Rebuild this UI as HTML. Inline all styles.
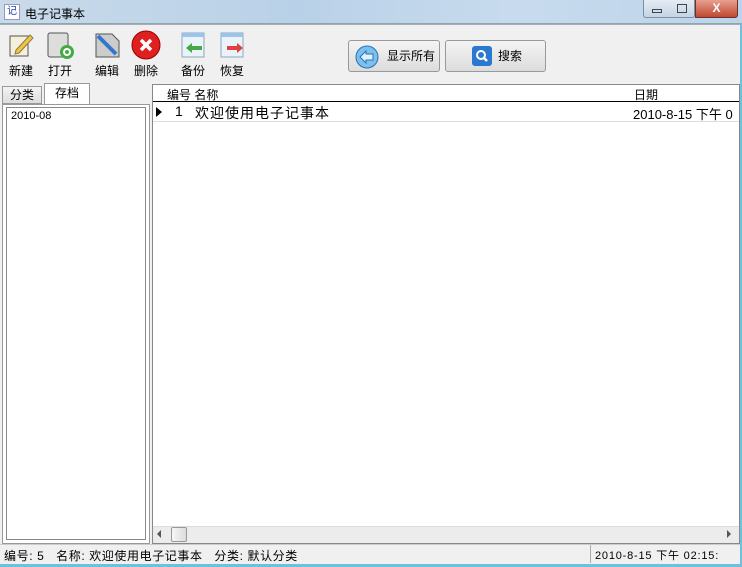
<!DOCTYPE html>
<html><head><meta charset="utf-8"><style>
*{margin:0;padding:0;box-sizing:border-box}
body{width:742px;height:567px;overflow:hidden;background:#f0f0f0;font-family:"Liberation Sans","Noto Sans CJK SC",sans-serif;font-size:12px;color:#000;position:relative}
.abs{position:absolute}
#title{left:0;top:0;width:742px;height:24px;background:linear-gradient(90deg,#c9daea,#b9d1e8 40%,#c8dbee 70%,#bcd3ea);border-bottom:1px solid #8aa;}
.btn{position:absolute;top:30px;text-align:center;font-size:12px}
.btn .ic{width:30px;height:30px;margin:0 auto 2px}
.bigbtn{position:absolute;top:40px;height:32px;border:1px solid #999;border-radius:3px;background:linear-gradient(#f4f4f4,#dcdcdc);font-size:12px;line-height:30px}
</style></head><body>
<div id="title" class="abs">
  <div class="abs" style="left:4px;top:4px;width:16px;height:16px;background:#fff;border:1px solid #99b;font-size:10px;color:#24a;text-align:center;line-height:14px">记</div>
  <div class="abs" style="left:25px;top:5px;font-size:12px">电子记事本</div>
  <div class="abs" style="left:643px;top:0;width:52px;height:18px;border:1px solid #7c8ea0;border-top:none;border-radius:0 0 3px 3px;background:linear-gradient(#e4ecf4,#c4d4e4)">
    <div class="abs" style="left:8px;top:9px;width:10px;height:4px;border:1px solid #444"></div>
    <div class="abs" style="left:33px;top:4px;width:10px;height:9px;border:1px solid #444"></div>
  </div>
  <div class="abs" style="left:695px;top:0;width:43px;height:18px;border:1px solid #6a3030;border-top:none;border-radius:0 0 3px 0;background:linear-gradient(#e8a090,#c04830);color:#fff;text-align:center;font-weight:bold;font-size:12px;line-height:16px">X</div>
</div>
<div class="abs" style="left:0;top:24px;width:742px;height:1px;background:#aab"></div>
<div class="btn" style="left:6px;width:30px"><div class="ic"><svg width="30" height="30"><rect x="4" y="6" width="18" height="20" fill="#f4f0dc" stroke="#555"/><path d="M10 20 L24 5 L27 8 L13 23 L9 24Z" fill="#f0c830" stroke="#876"/></svg></div>新建</div>
<div class="btn" style="left:45px;width:30px"><div class="ic"><svg width="30" height="30"><rect x="3" y="3" width="20" height="24" rx="2" fill="#ddd" stroke="#555"/><circle cx="22" cy="22" r="7" fill="#4a4"/><circle cx="22" cy="22" r="3" fill="none" stroke="#fff" stroke-width="2"/></svg></div>打开</div>
<div class="btn" style="left:92px;width:30px"><div class="ic"><svg width="30" height="30"><path d="M4 4 H20 L27 11 V27 H4Z" fill="#ccc" stroke="#555"/><path d="M6 6 L24 24" stroke="#3377cc" stroke-width="4"/></svg></div>编辑</div>
<div class="btn" style="left:131px;width:30px"><div class="ic"><svg width="30" height="30"><circle cx="15" cy="15" r="14" fill="#e02020" stroke="#900"/><path d="M10 10 L20 20 M20 10 L10 20" stroke="#fff" stroke-width="3.5"/></svg></div>删除</div>
<div class="btn" style="left:178px;width:30px"><div class="ic"><svg width="30" height="30"><rect x="4" y="3" width="22" height="24" fill="#eaf2fa" stroke="#8ab"/><rect x="4" y="3" width="22" height="4" fill="#9cc4e8"/><path d="M8 18 L14 13 V16 H24 V20 H14 V23Z" fill="#4a4"/></svg></div>备份</div>
<div class="btn" style="left:217px;width:30px"><div class="ic"><svg width="30" height="30"><rect x="4" y="3" width="22" height="24" fill="#eaf2fa" stroke="#8ab"/><rect x="4" y="3" width="22" height="4" fill="#9cc4e8"/><path d="M26 18 L20 13 V16 H10 V20 H20 V23Z" fill="#e04040"/></svg></div>恢复</div>
<div class="bigbtn" style="left:348px;width:92px"><svg class="abs" style="left:6px;top:4px" width="24" height="24"><circle cx="12" cy="12" r="11" fill="#7cc0ee" stroke="#2a70b0"/><path d="M5 12 L11 6 V9 H18 V15 H11 V18Z" fill="#dff0ff" stroke="#2a70b0"/></svg><span class="abs" style="left:38px;top:0">显示所有</span></div>
<div class="bigbtn" style="left:445px;width:101px"><div class="abs" style="left:26px;top:5px;width:20px;height:20px;background:#2a78d0;border-radius:3px"><svg width="20" height="20"><circle cx="9" cy="9" r="4" fill="none" stroke="#fff" stroke-width="2"/><path d="M12 12 L15 15" stroke="#fff" stroke-width="2.5"/></svg></div><span class="abs" style="left:52px;top:0">搜索</span></div>
<div class="abs" style="left:2px;top:86px;width:40px;height:18px;border:1px solid #999;background:linear-gradient(#f4f4f4,#ddd);text-align:center;line-height:16px">分类</div>
<div class="abs" style="left:44px;top:83px;width:46px;height:22px;border:1px solid #999;border-bottom:none;background:#fff;text-align:center;line-height:18px">存档</div>
<div class="abs" style="left:2px;top:104px;width:148px;height:440px;border:1px solid #999;background:#fff"></div>
<div class="abs" style="left:6px;top:107px;width:140px;height:433px;border:1px solid #888;background:#fff;padding:2px 4px;font-size:11px">2010-08</div>
<div class="abs" style="left:152px;top:84px;width:588px;height:460px;border:1px solid #888;background:#fff"></div>
<div class="abs" style="left:153px;top:85px;width:586px;height:17px;border-bottom:1px solid #000;background:#fff"></div>
<div class="abs" style="left:167px;top:86px">编号 名称</div>
<div class="abs" style="left:634px;top:86px">日期</div>
<div class="abs" style="left:156px;top:107px;width:0;height:0;border-left:6px solid #000;border-top:5px solid transparent;border-bottom:5px solid transparent"></div>
<div class="abs" style="left:175px;top:103px;font-size:14px">1</div>
<div class="abs" style="left:195px;top:103px;font-size:14px;letter-spacing:1px">欢迎使用电子记事本</div>
<div class="abs" style="left:633px;top:104px;font-size:13px;white-space:nowrap">2010-8-15 下午 0</div>
<div class="abs" style="left:153px;top:121px;width:586px;height:1px;background:#ddd"></div>
<div class="abs" style="left:153px;top:526px;width:586px;height:17px;background:#ececec;border-top:1px solid #ddd"></div>
<div class="abs" style="left:157px;top:530px;border-right:4px solid #555;border-top:4px solid transparent;border-bottom:4px solid transparent"></div>
<div class="abs" style="left:171px;top:527px;width:16px;height:15px;border:1px solid #999;border-radius:2px;background:linear-gradient(90deg,#f6f6f6,#dcdcdc)"></div>
<div class="abs" style="left:727px;top:530px;border-left:4px solid #555;border-top:4px solid transparent;border-bottom:4px solid transparent"></div>
<div class="abs" style="left:0;top:544px;width:742px;height:23px;background:#f0f0f0;border-top:1px solid #ccc"></div>
<div class="abs" style="left:4px;top:547px;white-space:nowrap;letter-spacing:0.6px">编号: 5&nbsp;&nbsp;&nbsp;名称: 欢迎使用电子记事本&nbsp;&nbsp;&nbsp;分类: 默认分类</div>
<div class="abs" style="left:590px;top:545px;width:1px;height:18px;background:#aaa"></div>
<div class="abs" style="left:595px;top:547px;white-space:nowrap;font-size:11px;letter-spacing:0.8px">2010-8-15 下午 02:15:</div>
<div class="abs" style="left:0;top:564px;width:742px;height:3px;background:#6cc0e0"></div>
<div class="abs" style="left:740px;top:24px;width:2px;height:543px;background:#6cc0e0"></div>
</body></html>
